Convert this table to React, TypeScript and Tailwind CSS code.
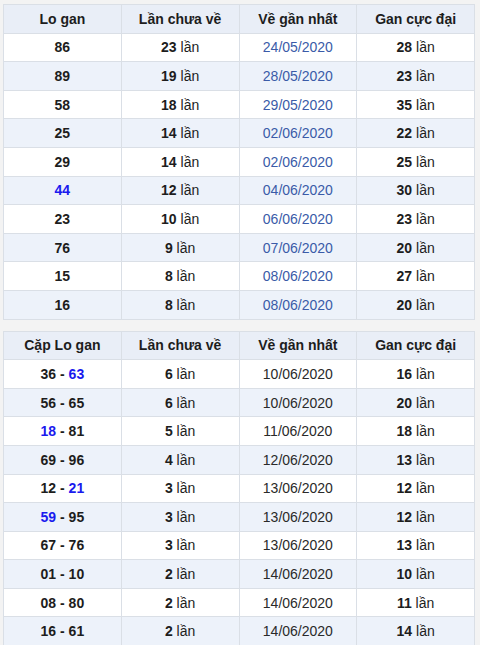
import React from "react";

type Row = { a: React.ReactNode; n: number; date: string; max: number; alt: boolean };

const B = ({ children }: { children: React.ReactNode }) => (
  <span className="text-[#1a1aee]">{children}</span>
);

const loGan: Row[] = [
  { a: "86", n: 23, date: "24/05/2020", max: 28, alt: false },
  { a: "89", n: 19, date: "28/05/2020", max: 23, alt: true },
  { a: "58", n: 18, date: "29/05/2020", max: 35, alt: false },
  { a: "25", n: 14, date: "02/06/2020", max: 22, alt: true },
  { a: "29", n: 14, date: "02/06/2020", max: 25, alt: false },
  { a: <B>44</B>, n: 12, date: "04/06/2020", max: 30, alt: true },
  { a: "23", n: 10, date: "06/06/2020", max: 23, alt: false },
  { a: "76", n: 9, date: "07/06/2020", max: 20, alt: true },
  { a: "15", n: 8, date: "08/06/2020", max: 27, alt: false },
  { a: "16", n: 8, date: "08/06/2020", max: 20, alt: true },
];

const capLo: Row[] = [
  { a: <>36 - <B>63</B></>, n: 6, date: "10/06/2020", max: 16, alt: false },
  { a: "56 - 65", n: 6, date: "10/06/2020", max: 20, alt: true },
  { a: <><B>18</B> - 81</>, n: 5, date: "11/06/2020", max: 18, alt: false },
  { a: "69 - 96", n: 4, date: "12/06/2020", max: 13, alt: true },
  { a: <>12 - <B>21</B></>, n: 3, date: "13/06/2020", max: 12, alt: false },
  { a: <><B>59</B> - 95</>, n: 3, date: "13/06/2020", max: 12, alt: true },
  { a: "67 - 76", n: 3, date: "13/06/2020", max: 13, alt: false },
  { a: "01 - 10", n: 2, date: "14/06/2020", max: 10, alt: true },
  { a: "08 - 80", n: 2, date: "14/06/2020", max: 11, alt: false },
  { a: "16 - 61", n: 2, date: "14/06/2020", max: 14, alt: true },
];

const cell = "border border-[#dadfe6] text-center align-middle p-0";

function StatTable({ first, rows, dateColor }: { first: string; rows: Row[]; dateColor: string }) {
  return (
    <table className="w-[472px] table-fixed border-collapse bg-white">
      <thead>
        <tr className="h-[28.6px] bg-[#e9eef7]">
          {[first, "Lần chưa về", "Về gần nhất", "Gan cực đại"].map((h) => (
            <th key={h} className={`${cell} font-bold text-[#1d1d1d]`}>{h}</th>
          ))}
        </tr>
      </thead>
      <tbody>
        {rows.map((r, i) => (
          <tr key={i} className={`h-[28.6px] ${r.alt ? "bg-[#edf2fa]" : "bg-white"}`}>
            <td className={`${cell} font-bold text-[#1d1d1d]`}>{r.a}</td>
            <td className={`${cell} text-[#1d1d1d]`}><b>{r.n}</b> lần</td>
            <td className={`${cell} ${dateColor}`}>{r.date}</td>
            <td className={`${cell} text-[#1d1d1d]`}><b>{r.max}</b> lần</td>
          </tr>
        ))}
      </tbody>
    </table>
  );
}

export default function App() {
  return (
    <div
      className="w-[480px] h-[645px] overflow-hidden bg-[#f3f3f3] pt-[4px] pl-[3px] text-[14px] leading-none"
      style={{ fontFamily: '"Liberation Sans", Arial, sans-serif' }}
    >
      <StatTable first="Lo gan" rows={loGan} dateColor="text-[#3a5ba8]" />
      <div className="h-[11px]" />
      <StatTable first="Cặp Lo gan" rows={capLo} dateColor="text-[#2a2a2a]" />
    </div>
  );
}
